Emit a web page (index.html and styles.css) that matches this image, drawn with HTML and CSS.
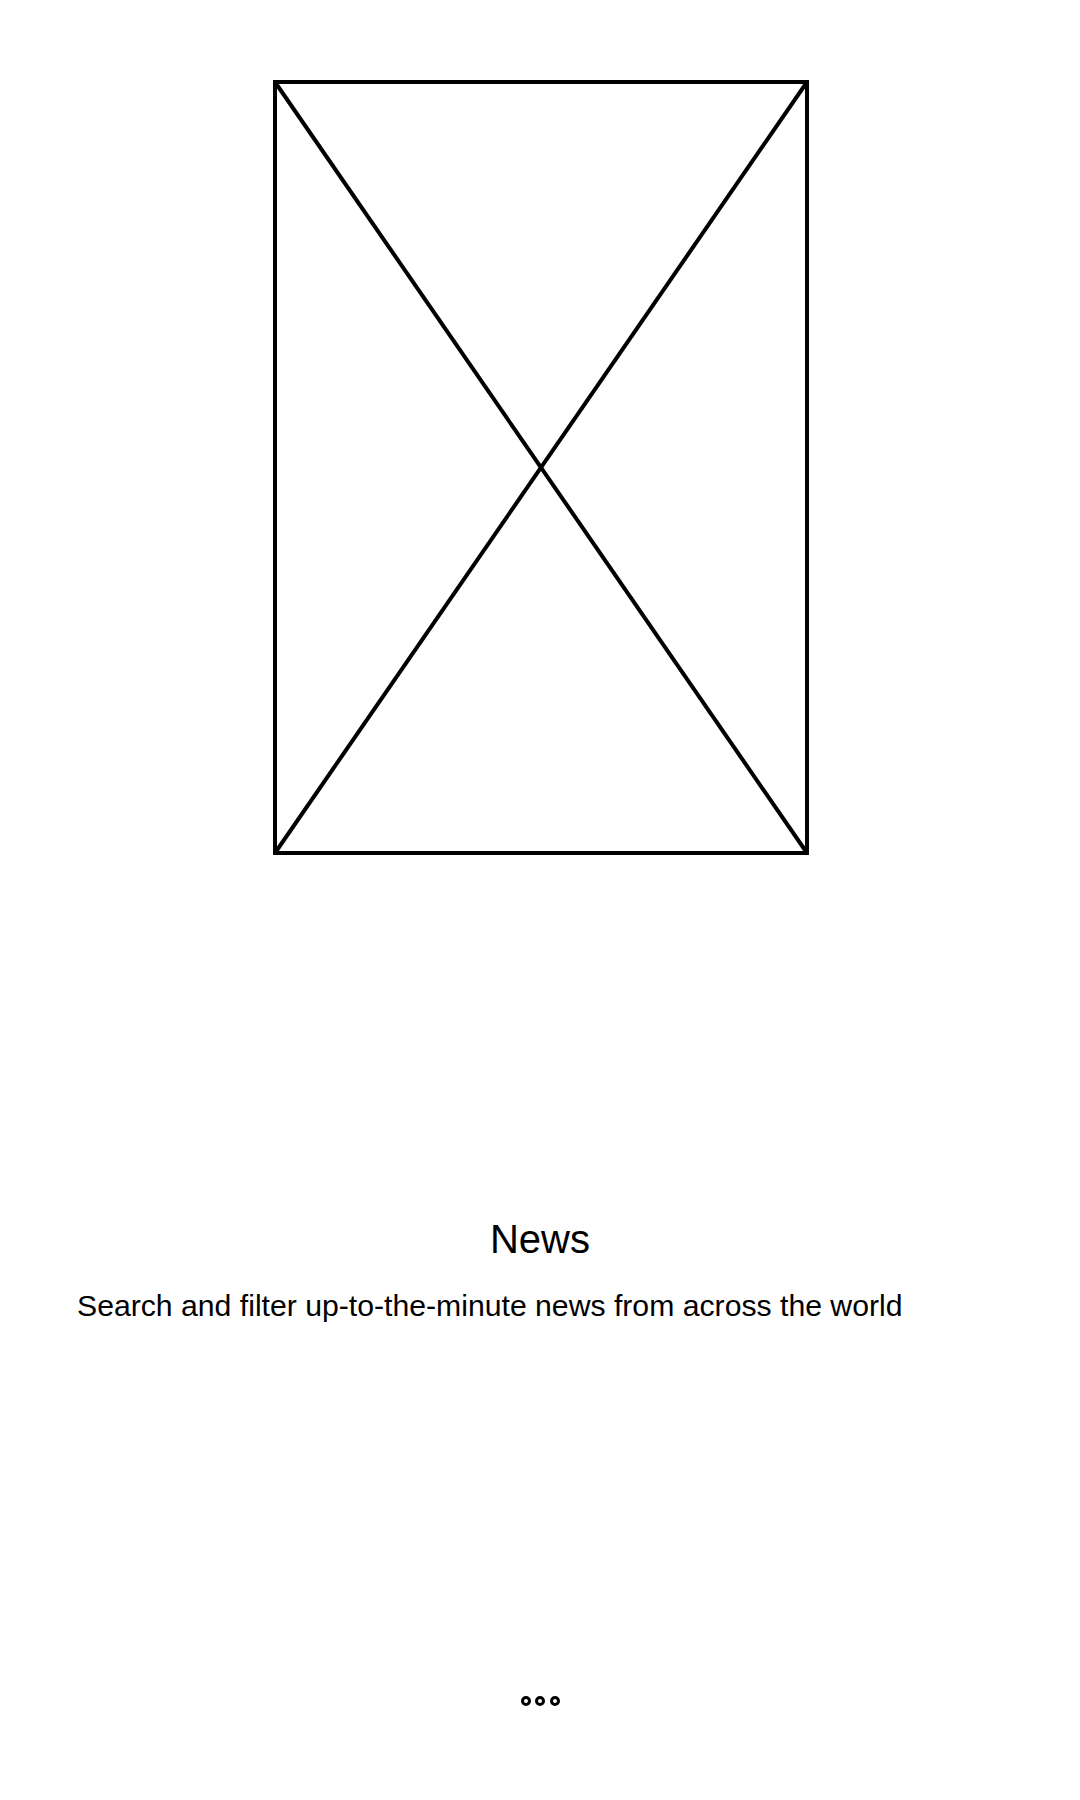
FILE: index.html
```html
<!DOCTYPE html>
<html lang="en">
<head>
    <meta charset="UTF-8">
    <meta name="viewport" content="width=device-width, initial-scale=1.0">
    <title>News</title>
    <link rel="stylesheet" href="styles.css">
</head>
<body>
    <div class="screen">
        <div class="image-placeholder">
            <svg width="536" height="775" viewBox="0 0 536 775">
                <rect x="2" y="2" width="532" height="771" fill="none" stroke="#000" stroke-width="4"/>
                <line x1="2" y1="2" x2="534" y2="773" stroke="#000" stroke-width="4"/>
                <line x1="534" y1="2" x2="2" y2="773" stroke="#000" stroke-width="4"/>
            </svg>
        </div>

        <h1 class="title">News</h1>
        <p class="subtitle">Search and filter up-to-the-minute news from across the world</p>

        <div class="dots">
            <span class="dot"></span>
            <span class="dot"></span>
            <span class="dot"></span>
        </div>
    </div>
</body>
</html>
```

FILE: styles.css
```css
body {
    margin: 0;
    background-color: #fff;
    color: #000;
    font-family: "Liberation Sans", Arial, sans-serif;
}
.screen {
    display: flex;
    flex-direction: column;
    padding-top: 80px;
}
.image-placeholder {
    display: flex;
    justify-content: center;
    padding-left: 2px;
}
.image-placeholder svg {
    display: block;
}
.title {
    margin: 364px 0 0;
    font-size: 40px;
    font-weight: normal;
    line-height: 40px;
    text-align: center;
}
.subtitle {
    margin: 32px 0 0;
    padding-left: 77px;
    font-size: 30.2px;
    line-height: 30px;
}
.dots {
    display: flex;
    justify-content: center;
    gap: 4.5px;
    margin-top: 375px;
}
.dot {
    width: 10px;
    height: 10px;
    border: 3px solid #000;
    border-radius: 50%;
    box-sizing: border-box;
}
```
